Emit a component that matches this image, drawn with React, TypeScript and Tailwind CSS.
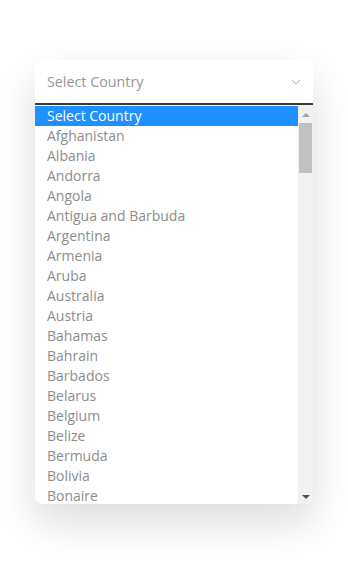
import { ChevronDown } from "lucide-react";

const countries = [
  "Select Country",
  "Afghanistan",
  "Albania",
  "Andorra",
  "Angola",
  "Antigua and Barbuda",
  "Argentina",
  "Armenia",
  "Aruba",
  "Australia",
  "Austria",
  "Bahamas",
  "Bahrain",
  "Barbados",
  "Belarus",
  "Belgium",
  "Belize",
  "Bermuda",
  "Bolivia",
  "Bonaire",
];

export default function App() {
  return (
    <div className="w-[348px] h-[565px] bg-white pt-[60px] pl-[35px] font-['Open_Sans',sans-serif]">
      <div className="w-[278px] rounded-lg bg-white shadow-[0_18px_40px_rgba(0,0,0,0.14)] overflow-hidden">
        <div className="h-[43px] flex items-center justify-between pl-3 pr-[9px]">
          <span className="text-[14.3px] text-[#969696]">Select Country</span>
          <ChevronDown size={16} strokeWidth={1.5} className="text-[#a8a8a8]" />
        </div>
        <div className="flex border-t-2 border-[#3a3a3a] h-[401px]">
          <ul className="flex-1 overflow-hidden pt-px">
            {countries.map((c, i) => (
              <li
                key={c}
                className={`h-5 leading-5 pl-3 text-[14px] ${
                  i === 0 ? "bg-[#1e90ff] text-white" : "text-[#8c8c8c]"
                }`}
              >
                {c}
              </li>
            ))}
          </ul>
          <div className="w-[15px] bg-[#f1f1f1] flex flex-col items-center pt-px">
            <div className="h-[17px] flex items-center justify-center">
              <div className="w-0 h-0 border-l-[4px] border-r-[4px] border-b-[4px] border-l-transparent border-r-transparent border-b-[#a3a3a3]" />
            </div>
            <div className="w-[13px] h-[50px] bg-[#c1c1c1]" />
            <div className="flex-1" />
            <div className="h-[15px] flex items-center justify-center">
              <div className="w-0 h-0 border-l-[4px] border-r-[4px] border-t-[4px] border-l-transparent border-r-transparent border-t-[#505050]" />
            </div>
          </div>
        </div>
      </div>
    </div>
  );
}
